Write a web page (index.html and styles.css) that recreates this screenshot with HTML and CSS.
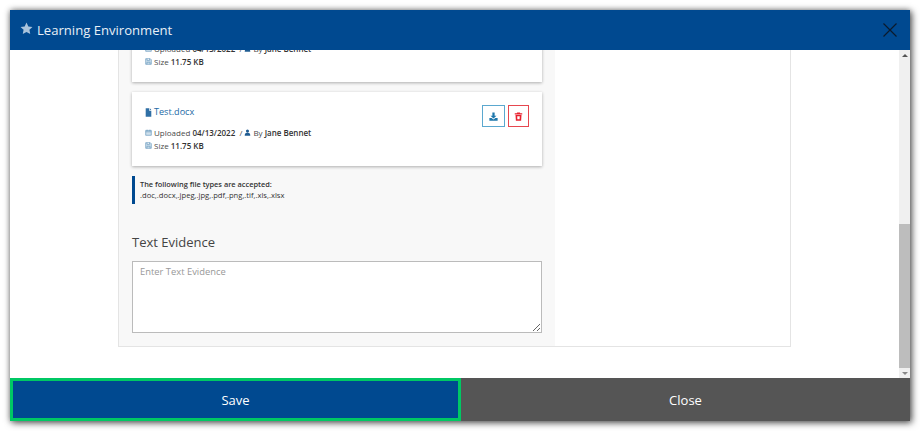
FILE: index.html
```html
<!DOCTYPE html>
<html lang="en">
<head>
<meta charset="utf-8">
<title>Learning Environment</title>
<link rel="stylesheet" href="styles.css">
</head>
<body>
<div class="modal">
  <header class="modal-header">
    <div class="modal-title">
      <svg class="star" viewBox="0 0 24 24"><path d="M12 1l3.400 7.200 7.600 1-5.600 5.300 1.500 7.800L12 18.500l-6.900 3.800 1.500-7.800L1 9.200l7.600-1z"/></svg>
      <span>Learning Environment</span>
    </div>
    <svg class="close" viewBox="0 0 14 14"><path d="M0.500 0.500L13.500 13.500M13.500 0.500L0.500 13.500"/></svg>
  </header>
  <div class="modal-body">
    <div class="scroll-area">
      <div class="panel">
        <div class="panel-left">
          <div class="card">
            <div class="card-top">
              <a class="file-link" href="#"><svg class="fi" viewBox="0 0 10 12"><path d="M1 0h5v3.500h3V12H1zM7 0l2 2.500H7z"/></svg>Test.docx</a>
            </div>
            <div class="meta">
              <div class="meta-row"><svg class="mi" viewBox="0 0 10 10"><path d="M1 2h8v7H1zM1 4h8M3 1v2M7 1v2" class="line"/></svg><span>Uploaded <b>04/13/2022</b> &nbsp;/ </span><svg class="mi dark" viewBox="0 0 10 10"><circle cx="5" cy="3" r="2.200"/><path d="M1 9.500c0-3 1.500-4 4-4s4 1 4 4z"/></svg><span>By <b>Jane Bennet</b></span></div>
              <div class="meta-row"><svg class="mi" viewBox="0 0 10 10"><path d="M1 1h6.500L9 2.500V9H1zM3 1v2.500h3.500V1M2.800 9V6h4.400v3" class="line"/></svg><span>Size <b>11.75 KB</b></span></div>
            </div>
          </div>
          <div class="card">
            <div class="card-top">
              <a class="file-link" href="#"><svg class="fi" viewBox="0 0 10 12"><path d="M1 0h5v3.500h3V12H1zM7 0l2 2.500H7z"/></svg>Test.docx</a>
              <div class="actions">
                <button class="act act-dl"><svg viewBox="0 0 12 12"><path d="M4.500 0.500h3v4.500h2.500L6 8.500 2 5h2.500zM0.500 8h3L6 10l2.500-2h3v3.500H0.500z"/></svg></button>
                <button class="act act-del"><svg viewBox="0 0 12 12"><path d="M4.200 0.500h3.600l.5 1.200h2.700v1.500H1V1.700h2.700zM2 4h8l-.5 7.500h-7zM4.300 5.500l.2 4.300h3l.2-4.300z" fill-rule="evenodd"/></svg></button>
              </div>
            </div>
            <div class="meta">
              <div class="meta-row"><svg class="mi" viewBox="0 0 10 10"><path d="M1 2h8v7H1zM1 4h8M3 1v2M7 1v2" class="line"/></svg><span>Uploaded <b>04/13/2022</b> &nbsp;/ </span><svg class="mi dark" viewBox="0 0 10 10"><circle cx="5" cy="3" r="2.200"/><path d="M1 9.500c0-3 1.500-4 4-4s4 1 4 4z"/></svg><span>By <b>Jane Bennet</b></span></div>
              <div class="meta-row"><svg class="mi" viewBox="0 0 10 10"><path d="M1 1h6.500L9 2.500V9H1zM3 1v2.500h3.500V1M2.800 9V6h4.400v3" class="line"/></svg><span>Size <b>11.75 KB</b></span></div>
            </div>
          </div>
          <div class="note">
            <div class="note-head">The following file types are accepted:</div>
            <div class="note-list">.doc,.docx,.jpeg,.jpg,.pdf,.png,.tif,.xls,.xlsx</div>
          </div>
          <label class="field-label" for="ev">Text Evidence</label>
          <textarea id="ev" class="field" placeholder="Enter Text Evidence"></textarea>
        </div>
      </div>
    </div>
    <div class="scrollbar">
      <div class="arrow arrow-up"></div>
      <div class="track"><div class="thumb"></div></div>
      <div class="arrow arrow-down"></div>
    </div>
  </div>
  <footer class="modal-footer">
    <button class="btn btn-save">Save</button>
    <button class="btn btn-close">Close</button>
  </footer>
</div>
</body>
</html>
```

FILE: styles.css
```css
* { box-sizing: border-box; }
html, body { margin: 0; height: 100%; background: #fff; overflow: hidden; }
body { padding: 10px; font-family: "Open Sans", sans-serif; color: #333; }

.modal {
  width: 900px;
  height: 411px;
  display: flex;
  flex-direction: column;
  background: #fff;
  box-shadow: 2px 2px 7px rgba(0,0,0,.55), 0 0 6px rgba(0,0,0,.4);
}
.modal-header {
  height: 40px;
  flex: none;
  background: #004990;
  display: flex;
  align-items: center;
  justify-content: space-between;
  padding: 0 13px 0 10px;
}
.modal-title { display: flex; align-items: center; gap: 4px; color: #e8eff6; font-size: 13.100px; margin-top: -1px; }
.star { width: 13px; height: 13px; fill: #a9c3dc; margin-top: -3px; }
.close { width: 14px; height: 14px; stroke: #0b1a2c; stroke-width: 1.200; fill: none; }

.modal-body { flex: 1; min-height: 0; display: flex; }
.scroll-area { flex: 1; min-width: 0; overflow: hidden; }
.panel {
  width: 673px;
  height: 339px;
  margin: -42px 0 0 108px;
  border: 1px solid #e4e4e4;
  border-top: 0;
  background: #fff;
}
.panel-left { width: 436px; height: 100%; background: #f8f8f8; padding: 0 13px; display: flex; flex-direction: column; }

.card { background: #fff; box-shadow: 0 1px 3px rgba(0,0,0,.3); padding: 13px; height: 74px; margin-bottom: 10px; flex: none; }
.card-top { display: flex; justify-content: space-between; align-items: flex-start; height: 20px; }
.file-link { color: #1c6aa6; font-size: 9.100px; text-decoration: none; display: flex; align-items: center; gap: 2px; line-height: 14px; }
.fi { width: 7px; height: 9px; fill: #2f6fa5; }
.actions { display: flex; gap: 3px; }
.act { height: 22px; background: #fff; padding: 0; display: flex; align-items: center; justify-content: center; }
.act svg { width: 9px; height: 9px; }
.act-dl { width: 23px; border: 1px solid #5ba8cf; }
.act-dl svg { fill: #1f78ac; }
.act-del { width: 21px; border: 1px solid #e6474f; }
.act-del svg { fill: #e8202e; }

.meta { font-size: 8px; line-height: 13px; color: #4a4a4a; margin-top: 1px; }
.meta-row { display: flex; align-items: center; white-space: pre; }
.meta b { font-weight: 600; color: #333; }
.mi { width: 7px; height: 7px; margin-right: 2px; flex: none; }
.mi .line { fill: #cfe0ec; stroke: #6b9cc0; stroke-width: 1; }
.mi.dark { fill: #1f5c92; }

.note { border-left: 3px solid #004990; height: 28px; padding: 3px 0 0 5px; line-height: 11px; color: #333; flex: none; }
.note-head { font-size: 7.400px; font-weight: 600; }
.note-list { font-size: 7.600px; }
.field-label { display: block; font-size: 13px; line-height: 18px; color: #444; margin-top: 29px; }
.field {
  display: block;
  width: 100%;
  height: 72px;
  margin-top: 10px;
  flex: none;
  border: 1px solid #bbb;
  background: #fff;
  padding: 3px 7px;
  font: 9.400px "Open Sans", sans-serif;
}
.field::placeholder { color: #999; opacity: 1; }

.scrollbar { width: 11px; flex: none; background: #f0f0f0; display: flex; flex-direction: column; }
.arrow { height: 11px; flex: none; display: flex; align-items: center; justify-content: center; }
.arrow-down { height: 10px; }
.arrow::before { content: ""; border-left: 3px solid transparent; border-right: 3px solid transparent; }
.arrow-up::before { border-bottom: 3px solid #555; }
.arrow-down::before { border-top: 3px solid #888; }
.track { flex: 1; display: flex; flex-direction: column; justify-content: flex-end; }
.thumb { height: 144px; background: #bdbdbd; }

.modal-footer { height: 43px; flex: none; display: flex; }
.btn { border: 0; padding: 0; color: #fff; font: 13px "Open Sans", sans-serif; cursor: pointer; }
.btn-save { width: 451px; background: #004990; border: 3px solid #00c864; }
.btn-close { flex: 1; background: #555; }
```
